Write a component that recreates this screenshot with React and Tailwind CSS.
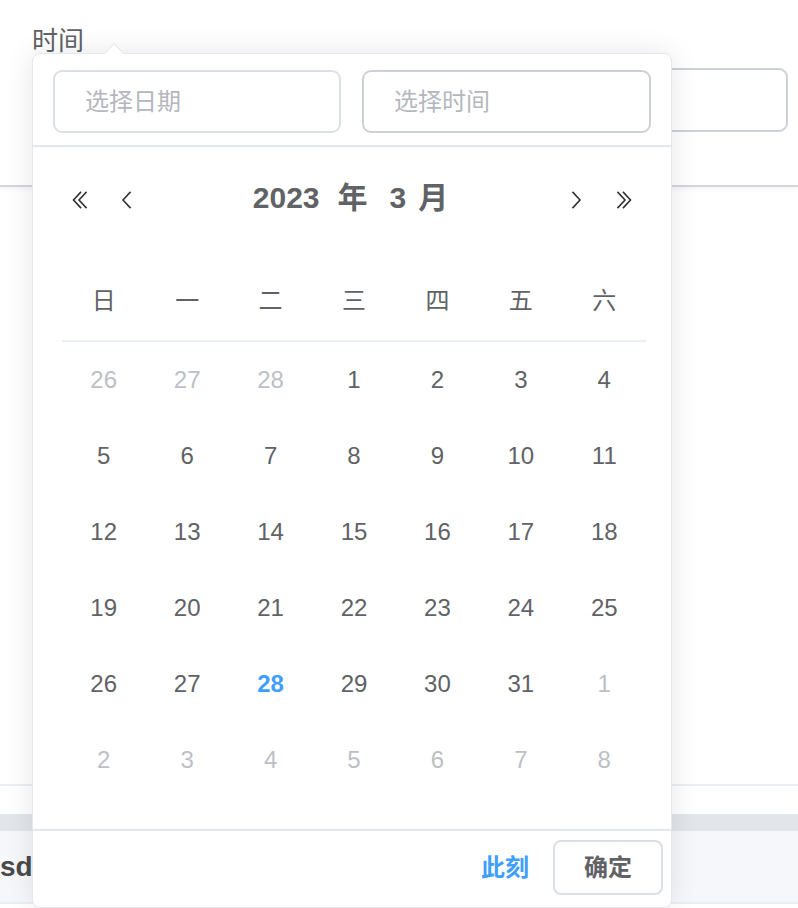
import React from 'react'

const FONT = { fontFamily: '"Liberation Sans", "Noto Sans CJK SC", sans-serif' }

const weekDays = ['日', '一', '二', '三', '四', '五', '六']

// 2023年3月的日历格子
const buildDays = () => {
    const cells = []
    ;[26, 27, 28].forEach(d => cells.push({ d, muted: true }))
    for (let d = 1; d <= 31; d++) cells.push({ d, today: d === 28 })
    for (let d = 1; d <= 8; d++) cells.push({ d, muted: true })
    return cells
}

const Chevron = ({ dir = 'left', double = false }) => {
    const flip = dir === 'right' ? 'scale(-1,1) translate(-16,0)' : undefined
    return (
        <svg width="16" height="18" viewBox="0 0 16 18" fill="none" stroke="#303133" strokeWidth="1.6" strokeLinecap="square">
            <g transform={flip}>
                {double ? (
                    <>
                        <path d="M8.5 1.5 L1.5 9 L8.5 16.5" />
                        <path d="M14 1.5 L7 9 L14 16.5" />
                    </>
                ) : (
                    <path d="M11 1.5 L4 9 L11 16.5" />
                )}
            </g>
        </svg>
    )
}

const DatePanel = () => {
    const days = buildDays()
    return (
        <div className="absolute left-[32px] top-[53px] w-[640px] h-[855px] bg-white border border-[#e4e7ed] rounded-[8px] shadow-[0_0_28px_rgba(0,0,0,0.10)] flex flex-col">
            {/* 小箭头 */}
            <div className="absolute -top-[8px] left-[74px] w-[14px] h-[14px] rotate-45 bg-white border-l border-t border-[#e4e7ed]" />

            {/* 日期 / 时间输入 */}
            <div className="flex gap-[21px] px-[20px] pt-[16px] pb-[12px] border-b-2 border-[#e4e7ed]">
                <div className="w-[288px] h-[63px] border-2 border-[#dcdfe6] rounded-[9px] flex items-center pl-[30px] text-[24px] text-[#b4b7bd]">
                    选择日期
                </div>
                <div className="w-[289px] h-[63px] border-2 border-[#cdd0d6] rounded-[9px] flex items-center pl-[30px] text-[24px] text-[#b4b7bd]">
                    选择时间
                </div>
            </div>

            {/* 日历主体 */}
            <div className="flex-1 flex flex-col pt-[23px]">
                <div className="h-[60px] flex items-center px-[39px]">
                    <button className="w-[16px] flex items-center"><Chevron double /></button>
                    <button className="ml-[31px] w-[16px] flex items-center"><Chevron /></button>
                    <div className="flex-1 flex justify-center items-center gap-[22px] text-[30px] leading-[36px] font-bold text-[#606266] pr-[2px] pb-[4px]">
                        <span className="flex gap-[18px]"><span>2023</span><span>年</span></span>
                        <span className="flex gap-[12px]"><span>3</span><span>月</span></span>
                    </div>
                    <button className="w-[16px] flex items-center"><Chevron dir="right" /></button>
                    <button className="ml-[32px] w-[16px] flex items-center"><Chevron dir="right" double /></button>
                </div>

                <div className="ml-[29px] w-[584px] mt-[34px]">
                    <div className="grid grid-cols-7 h-[78px] pb-[2px] border-b-2 border-[#ebeef5]">
                        {weekDays.map(w => (
                            <div key={w} className="flex items-center justify-center text-[24px] text-[#606266]">{w}</div>
                        ))}
                    </div>
                    <div className="grid grid-cols-7">
                        {days.map((c, i) => (
                            <div
                                key={i}
                                className={`h-[76px] flex items-center justify-center text-[24px] ${c.muted ? 'text-[#bcbfc6]' : c.today ? 'text-[#409eff] font-bold' : 'text-[#606266]'}`}
                            >
                                {c.d}
                            </div>
                        ))}
                    </div>
                </div>
            </div>

            {/* 底部按钮 */}
            <div className="h-[78px] border-t-2 border-[#e4e7ed] flex items-start justify-end pt-[9px] pr-[8px] gap-[24px]">
                <button className="h-[55px] flex items-center text-[24px] font-bold text-[#409eff]">此刻</button>
                <button className="w-[110px] h-[55px] border-2 border-[#dcdfe6] rounded-[8px] text-[24px] font-bold text-[#606266] flex items-center justify-center">确定</button>
            </div>
        </div>
    )
}

export default function App() {
    return (
        <div className="relative w-[798px] h-[908px] bg-white overflow-hidden" style={FONT}>
            {/* 背景表单 */}
            <div className="h-[187px] border-b-2 border-[#d4d6d9] shadow-[0_2px_6px_rgba(0,0,0,0.05)] flex flex-col">
                <div className="mt-[26px] ml-[32px] text-[26px] leading-[30px] text-[#606266]">时间</div>
                <div className="mt-[12px] ml-[400px] mr-[10px] h-[64px] border-2 border-[#cdd0d6] rounded-[9px]" />
            </div>
            <div className="h-[599px] border-b-2 border-[#ebeef5]" />
            <div className="h-[28px]" />
            <div className="h-[17px] bg-[#e2e6ea]" />
            <div className="h-[73px] bg-[#f5f7fa] border-b-2 border-[#ebeef5] flex items-center">
                <span className="text-[28px] font-bold text-[#4a4a4a]">sd</span>
            </div>

            <DatePanel />
        </div>
    )
}
